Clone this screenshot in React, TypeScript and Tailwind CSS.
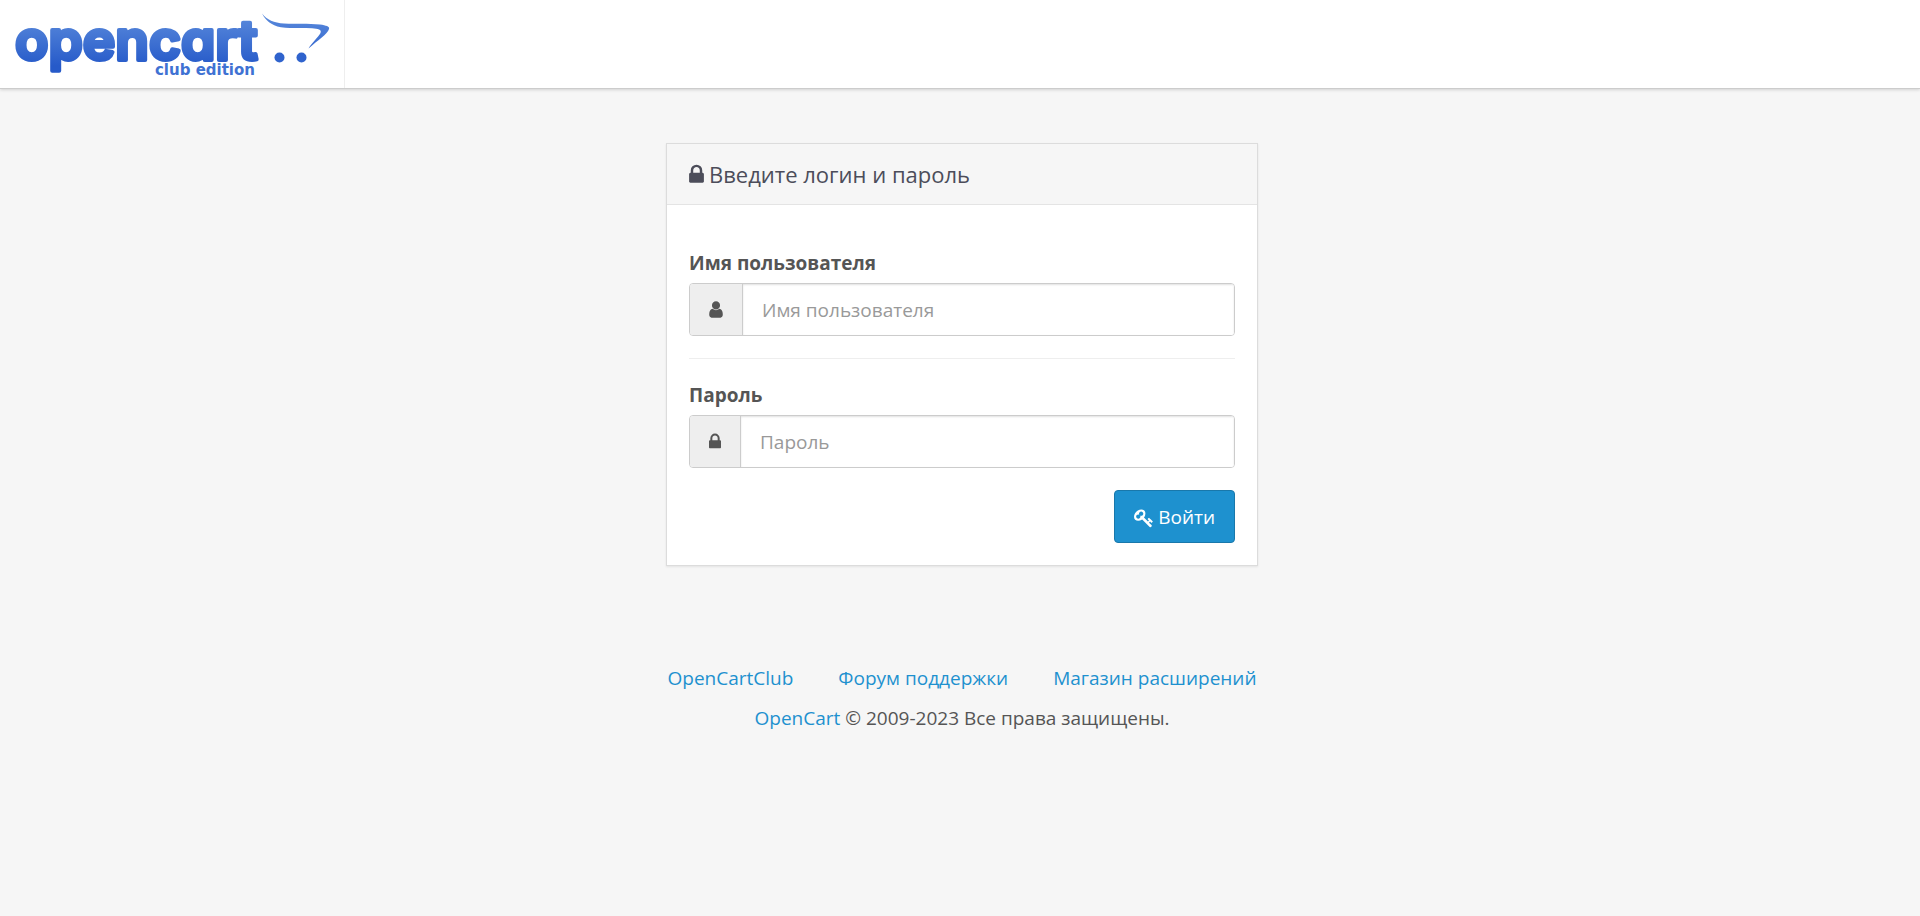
import type { ReactNode } from "react";

const LOCK =
  "M640 768h512v-192q0-106-75-181t-181-75-181 75-75 181v192zm832 96v576q0 40-28 68t-68 28h-960q-40 0-68-28t-28-68v-576q0-40 28-68t68-28h32v-192q0-184 132-316t316-132 316 132 132 316v192h32q40 0 68 28t28 68z";
const USER =
  "M1536 1399q0 109-62.5 187t-150.5 78h-854q-88 0-150.5-78t-62.5-187q0-85 8.5-160.5t31.5-152 58.5-131 94-89 134.5-34.5q131 128 313 128t313-128q76 0 134.5 34.5t94 89 58.5 131 31.5 152 8.5 160.5zm-256-887q0 159-112.5 271.5t-271.5 112.5-271.5-112.5-112.5-271.5 112.5-271.5 271.5-112.5 271.5 112.5 112.5 271.5z";
const KEY =
  "M832 512q0-80-56-136t-136-56-136 56-56 136q0 42 19 83-41-19-83-19-80 0-136 56t-56 136 56 136 136 56 136-56 56-136q0-42-19-83 41 19 83 19 80 0 136-56t56-136zm851 704q0 17-49 66t-66 49q-9 0-28.5-16t-36.5-33-38.5-40-24.5-26l-96 96 220 220q28 28 28 68 0 42-39 81t-81 39q-40 0-68-28l-671-671q-176 131-365 131-163 0-265.5-102.5t-102.5-265.5q0-160 95-313t248-248 313-95q163 0 265.5 102.5t102.5 265.5q0 189-131 365l355 355 96-96q-3-3-26-24.5t-40-38.5-33-36.5-16-28.5q0-17 49-66t66-49q13 0 23 10 6 6 46 44.5t82 79.5 86.5 86 73 78 28.5 41z";

function Icon({ path, viewBox, className }: { path: string; viewBox: string; className: string }) {
  return (
    <svg viewBox={viewBox} className={className} fill="currentColor" aria-hidden="true">
      <path d={path} />
    </svg>
  );
}

function Logo() {
  return (
    <svg width="332" height="88" viewBox="0 0 332 88" role="img" aria-label="opencart club edition">
      <defs>
        <linearGradient id="ink" gradientUnits="userSpaceOnUse" x1="0" y1="14" x2="0" y2="66">
          <stop offset="0" stopColor="#5b8bdc" />
          <stop offset="1" stopColor="#265ac9" />
        </linearGradient>
      </defs>
      <text
        x="15"
        y="60"
        fill="url(#ink)"
        stroke="url(#ink)"
        strokeWidth="4"
        strokeLinejoin="round"
        className="font-['Inter',sans-serif] text-[55px] font-semibold [font-feature-settings:'cv11']"
      >
        opencart
      </text>
      <text
        x="255"
        y="75"
        textAnchor="end"
        fill="#3f72d3"
        className="font-['DejaVu_Sans',sans-serif] text-[15px] font-bold"
      >
        club edition
      </text>
      <path
        fill="url(#ink)"
        d="M262 13.5C267 20 274 22.800 284 23.500C296 24 309 23 320 24.600C326 25.500 330 26.500 329 29C327.500 34 318 40 308.500 48.500C312 42.500 318 37.500 320.500 33C322 29.500 318 28.500 312 28.200C300 27.800 291 28.500 281 27.300C271 25.500 265.500 20 262 13.500Z"
      />
      <circle cx="279.500" cy="57.500" r="5" fill="#2f63cd" />
      <circle cx="301.500" cy="57.500" r="5" fill="#2f63cd" />
    </svg>
  );
}

function Field({
  id,
  label,
  type,
  icon,
}: {
  id: string;
  label: string;
  type: string;
  icon: ReactNode;
}) {
  return (
    <div className="flex flex-col gap-[6px]">
      <label htmlFor={id} className="self-start leading-[27px] font-bold">
        {label}
      </label>
      <div className="flex h-[53px] overflow-hidden rounded-[4px] border border-[#ccc]">
        <span className="flex items-center border-r border-[#ccc] bg-[#eee] px-[19px]">{icon}</span>
        <input
          id={id}
          type={type}
          placeholder={label}
          className="min-w-0 flex-1 bg-white px-[19px] pt-0.5 shadow-[inset_0_1px_2px_rgba(0,0,0,0.12)] outline-none placeholder:text-[#999]"
        />
      </div>
    </div>
  );
}

export default function App() {
  return (
    <div className="min-h-screen bg-[#f6f6f6] font-['Open_Sans',sans-serif] text-[19px] leading-[27px] text-[#555]">
      <header className="flex border-b border-[#ccc] bg-white shadow-[0_1px_3px_rgba(0,0,0,0.15)]">
        <a href="#" className="flex border-r border-[#eee] pr-3">
          <Logo />
        </a>
      </header>

      <main className="mx-auto mt-[54px] w-full max-w-[592px] translate-x-0.5">
        <section className="border border-[#dcdcdc] bg-white shadow-[0_1px_2px_rgba(0,0,0,0.08)]">
          <h1 className="flex items-center gap-[5px] border-b border-[#e4e4e4] bg-[#f6f6f6] px-[22px] py-[15px] text-[22px] leading-[30px] text-[#4c4d5a]">
            <Icon path={LOCK} viewBox="320 0 1152 1792" className="h-[23px] w-[15px]" />
            Введите логин и пароль
          </h1>
          <form className="flex flex-col px-[22px] pt-[45px] pb-[22px]" onSubmit={(e) => e.preventDefault()}>
            <Field
              id="username"
              type="text"
              label="Имя пользователя"
              icon={<Icon path={USER} viewBox="256 0 1280 1792" className="h-[19px] w-[14px]" />}
            />
            <hr className="mt-[22px] mb-[23px] border-[#eee]" />
            <Field
              id="password"
              type="password"
              label="Пароль"
              icon={<Icon path={LOCK} viewBox="320 0 1152 1792" className="h-[19px] w-[12px]" />}
            />
            <button
              type="submit"
              className="mt-[22px] flex h-[53px] items-center gap-1 self-end rounded-[4px] border border-[#1978ab] bg-[#1e91cf] px-[19px] pt-0.5 text-white"
            >
              <Icon path={KEY} viewBox="0 0 1792 1792" className="h-[20px] w-[20px]" />
              Войти
            </button>
          </form>
        </section>
      </main>

      <footer className="mt-[99px] flex translate-x-0.5 flex-col items-center gap-[13px] pb-10">
        <nav className="flex gap-[45px] text-[#1e91cf]">
          <a href="#">OpenCartClub</a>
          <a href="#">Форум поддержки</a>
          <a href="#">Магазин расширений</a>
        </nav>
        <p>
          <a href="#" className="text-[#1e91cf]">
            OpenCart
          </a>{" "}
          © 2009-2023 Все права защищены.
        </p>
      </footer>
    </div>
  );
}
